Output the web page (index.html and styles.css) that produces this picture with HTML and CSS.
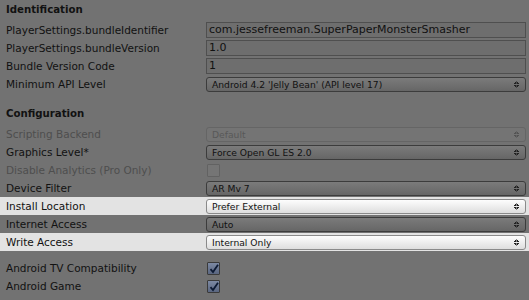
FILE: index.html
```html
<!DOCTYPE html>
<html lang="en">
<head>
    <meta charset="UTF-8">
    <title>Player Settings - Android</title>
    <link rel="stylesheet" href="styles.css">
</head>
<body>

    <div class="inspector">
        <!-- Identification -->
        <div class="section">
            <div class="heading">Identification</div>
            <div class="row">
                <span class="label">PlayerSettings.bundleIdentifier</span>
                <div class="field">com.jessefreeman.SuperPaperMonsterSmasher</div>
            </div>
            <div class="row">
                <span class="label">PlayerSettings.bundleVersion</span>
                <div class="field">1.0</div>
            </div>
            <div class="row">
                <span class="label">Bundle Version Code</span>
                <div class="field">1</div>
            </div>
            <div class="row">
                <span class="label">Minimum API Level</span>
                <div class="popup">Android 4.2 'Jelly Bean' (API level 17)</div>
            </div>
        </div>

        <!-- Configuration -->
        <div class="section">
            <div class="heading">Configuration</div>
            <div class="row disabled">
                <span class="label">Scripting Backend</span>
                <div class="popup">Default</div>
            </div>
            <div class="row">
                <span class="label">Graphics Level*</span>
                <div class="popup">Force Open GL ES 2.0</div>
            </div>
            <div class="row disabled">
                <span class="label">Disable Analytics (Pro Only)</span>
                <div class="check"></div>
            </div>
            <div class="row">
                <span class="label">Device Filter</span>
                <div class="popup">AR Mv 7</div>
            </div>
            <div class="row highlight">
                <span class="label">Install Location</span>
                <div class="popup">Prefer External</div>
            </div>
            <div class="row">
                <span class="label">Internet Access</span>
                <div class="popup">Auto</div>
            </div>
            <div class="row highlight">
                <span class="label">Write Access</span>
                <div class="popup">Internal Only</div>
            </div>
        </div>

        <div class="section">
            <div class="row">
                <span class="label">Android TV Compatibility</span>
                <div class="check checked">
                    <svg viewBox="0 0 12 12" width="12" height="12"><path d="M2.5 6.2 L5 9 L10 1.8" fill="none" stroke="#0d1a33" stroke-width="1.8"/></svg>
                </div>
            </div>
            <div class="row">
                <span class="label">Android Game</span>
                <div class="check checked">
                    <svg viewBox="0 0 12 12" width="12" height="12"><path d="M2.5 6.2 L5 9 L10 1.8" fill="none" stroke="#0d1a33" stroke-width="1.8"/></svg>
                </div>
            </div>
        </div>
    </div>

</body>
</html>
```

FILE: styles.css
```css
body, html {
    height: 100%;
    margin: 0;
    background-color: #727272;
    font-family: 'DejaVu Sans', Verdana, sans-serif;
    font-size: 10.5px;
    color: #111;
    overflow: hidden;
}

.inspector {
    padding-top: 1px;
    display: flex;
    flex-direction: column;
}

.section {
    display: flex;
    flex-direction: column;
}

.section + .section {
    margin-top: 12px;
}

.section:last-child {
    margin-top: 8px;
}

.heading {
    height: 18px;
    line-height: 18px;
    padding-left: 6px;
    font-weight: bold;
    font-size: 10.2px;
    margin-bottom: 2px;
}

.row {
    height: 18px;
    display: flex;
    align-items: center;
    padding: 0 3px 0 6px;
}

.row.highlight {
    background-color: #e3e3e3;
}

.label {
    width: 200px;
    flex-shrink: 0;
    white-space: nowrap;
}

.row.disabled .label {
    color: #4e4e4e;
}

.field {
    flex: 1;
    height: 14px;
    line-height: 14px;
    border: 1px solid #4f4f4f;
    background-color: #6e6e6e;
    padding-left: 2px;
    font-size: 11px;
    white-space: nowrap;
}

.popup {
    flex: 1;
    position: relative;
    height: 13px;
    line-height: 13px;
    border: 1px solid #3c3c3c;
    border-radius: 3px;
    background: linear-gradient(#7b7b7b, #666);
    padding-left: 5px;
    font-size: 9.2px;
    white-space: nowrap;
}

.popup::after {
    content: '';
    position: absolute;
    right: 6px;
    top: 3px;
    width: 5px;
    height: 7px;
    background:
        linear-gradient(to bottom right, transparent 50%, #222 50%) 0 0 / 2.5px 3px no-repeat,
        linear-gradient(to bottom left, transparent 50%, #222 50%) 2.5px 0 / 2.5px 3px no-repeat,
        linear-gradient(to top right, transparent 50%, #222 50%) 0 4px / 2.5px 3px no-repeat,
        linear-gradient(to top left, transparent 50%, #222 50%) 2.5px 4px / 2.5px 3px no-repeat;
}

.row.highlight .popup {
    border-color: #8a8a8a;
    background: linear-gradient(#fdfdfd, #dedede);
}

.row.disabled .popup {
    border-color: #656565;
    background: #747474;
    color: #585858;
}

.row.disabled .popup::after {
    opacity: 0.4;
}

.check {
    width: 11px;
    height: 11px;
    border: 1px solid #3a3a3a;
    border-radius: 1px;
    background: linear-gradient(#7c89a3, #5a6680);
    margin-left: 1px;
}

.row.disabled .check {
    border-color: #626262;
    background: #757575;
}

.check svg {
    display: block;
}
```
